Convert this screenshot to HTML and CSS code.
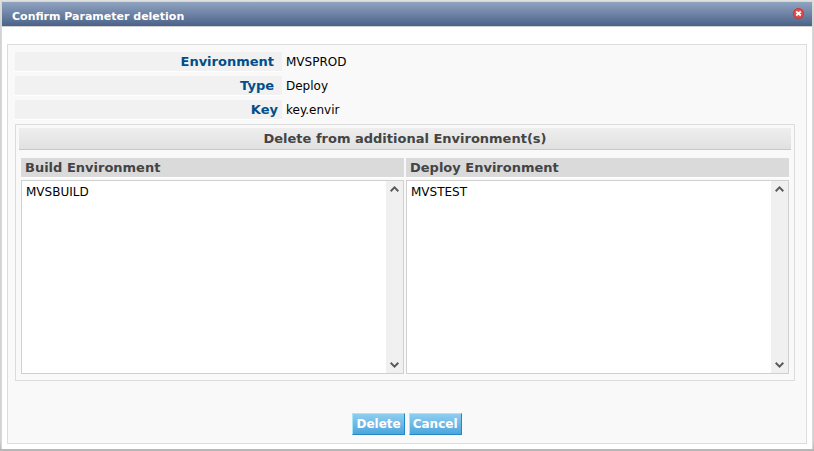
FILE: index.html
```html
<!DOCTYPE html>
<html lang="en">
<head>
<meta charset="utf-8">
<title>Confirm Parameter deletion</title>
<link rel="stylesheet" href="styles.css">
</head>
<body>
<form class="dialog">
  <header class="titlebar">
    <h1>Confirm Parameter deletion</h1>
    <button type="button" class="close" aria-label="Close">
      <svg viewBox="0 0 11 11" width="11" height="11"><circle cx="5.5" cy="5.5" r="5" fill="#ea4a46" stroke="#bd383c"/><path d="M3.200 3.500l4.600 4M7.800 3.500l-4.600 4" stroke="#fff" stroke-width="1.700"/></svg>
    </button>
  </header>
  <main class="content">
    <dl class="details">
      <dt class="spaced">Environment</dt><dd>MVSPROD</dd>
      <dt class="spaced">Type</dt><dd>Deploy</dd>
      <dt>Key</dt><dd>key.envir</dd>
    </dl>
    <section class="additional">
      <h2>Delete from additional Environment(s)</h2>
      <div class="columns">
        <div class="column">
          <label for="build">Build Environment</label>
          <div class="listbox">
            <select id="build" size="12" multiple><option>MVSBUILD</option></select>
            <div class="track">
              <svg viewBox="0 0 9 6" width="9" height="6"><path d="M.7 5.200L4.500 1.400l3.800 3.800"/></svg>
              <svg viewBox="0 0 9 6" width="9" height="6"><path d="M.7.8l3.800 3.800L8.300.8"/></svg>
            </div>
          </div>
        </div>
        <div class="column">
          <label for="deploy">Deploy Environment</label>
          <div class="listbox">
            <select id="deploy" size="12" multiple><option>MVSTEST</option></select>
            <div class="track">
              <svg viewBox="0 0 9 6" width="9" height="6"><path d="M.7 5.200L4.500 1.400l3.800 3.800"/></svg>
              <svg viewBox="0 0 9 6" width="9" height="6"><path d="M.7.8l3.800 3.800L8.300.8"/></svg>
            </div>
          </div>
        </div>
      </div>
    </section>
    <div class="actions">
      <button type="button" class="action">Delete</button>
      <button type="button" class="action">Cancel</button>
    </div>
  </main>
</form>
</body>
</html>
```
FILE: styles.css
```css
* { box-sizing: border-box; }

body {
  margin: 0;
  padding: 1px 1px 2px;
  background: linear-gradient(#e0e0dd, #d2d2d2 24px, #d2d2d2 440px, #b4b4b4);
  font: 12px/16px Verdana, "DejaVu Sans", sans-serif;
  color: #000;
}

.dialog {
  padding-bottom: 5px;
  border: 1px solid #d8d8d8;
  border-bottom-width: 0;
  background: #fff;
}

.titlebar {
  display: flex;
  justify-content: space-between;
  align-items: flex-start;
  height: 25px;
  padding: 6px 8px 0 10px;
  border-bottom: 1px solid #d0d0d0;
  background: linear-gradient(#90a3c1, #4b6288);
}

h1 {
  margin: 0;
  font-size: 11px;
  line-height: 17px;
  color: #fff;
}

.close {
  display: flex;
  padding: 0;
  border: 0;
  background: none;
}

.content {
  margin: 17px 5px 0;
  padding: 7px 11px 8px 7px;
  border: 1px solid #dcdcdc;
  background: #f9f9f9;
}

.details {
  display: grid;
  grid-template-columns: 267px 1fr;
  row-gap: 4px;
  margin: 0 0 4px;
}

dt {
  height: 20px;
  padding-right: 4px;
  border-bottom: 1px solid #fff;
  background: #f1f1f1;
  color: #004f8a;
  font-weight: bold;
  font-size: 13px;
  line-height: 19px;
  text-align: right;
}

.spaced { padding-right: 8px; }

dd {
  margin: 0;
  padding-left: 4px;
  line-height: 20px;
}

.additional {
  padding: 3px 3px 6px;
  border: 1px solid #dcdcdc;
}

h2 {
  margin: 0 0 8px;
  border-bottom: 1px solid #c8c8c8;
  background: linear-gradient(#eee, #e1e1e1);
  color: #444;
  font-size: 13px;
  line-height: 21px;
  text-align: center;
}

.columns {
  display: grid;
  grid-template-columns: 1fr 1fr;
  gap: 2px;
  padding: 0 2px;
}

.column label {
  display: block;
  height: 20px;
  padding-left: 4px;
  border-bottom: 1px solid #fff;
  background: #dadada;
  color: #444;
  font-weight: bold;
  font-size: 13px;
  line-height: 19px;
}

.listbox {
  display: flex;
  height: 194px;
  margin-top: 2px;
  border: 1px solid #d0d0d0;
  background: #fff;
}

select {
  flex: 1;
  min-width: 0;
  padding: 4px 2px;
  border: 0;
  background: #fff;
  color: #000;
  font: inherit;
  outline: 0;
  overflow: hidden;
}

option {
  padding: 0 2px;
  line-height: 16px;
}

.track {
  display: flex;
  flex-direction: column;
  justify-content: space-between;
  align-items: center;
  width: 17px;
  padding: 5px 0;
  background: #f0f0f0;
}

.track path {
  fill: none;
  stroke: #5a5a5a;
  stroke-width: 2;
}

.actions {
  display: flex;
  justify-content: center;
  gap: 4px;
  margin-top: 32px;
  padding: 0 0 0 4px;
}

.action {
  height: 22px;
  padding: 0 3px;
  border: 1px solid;
  border-color: #a8e4fa #2388c5 #2388c5 #a8e4fa;
  background: linear-gradient(#8fcdf0, #4ba6dc);
  color: #fff;
  font: bold 12px/18px Verdana, "DejaVu Sans", sans-serif;
}
```
